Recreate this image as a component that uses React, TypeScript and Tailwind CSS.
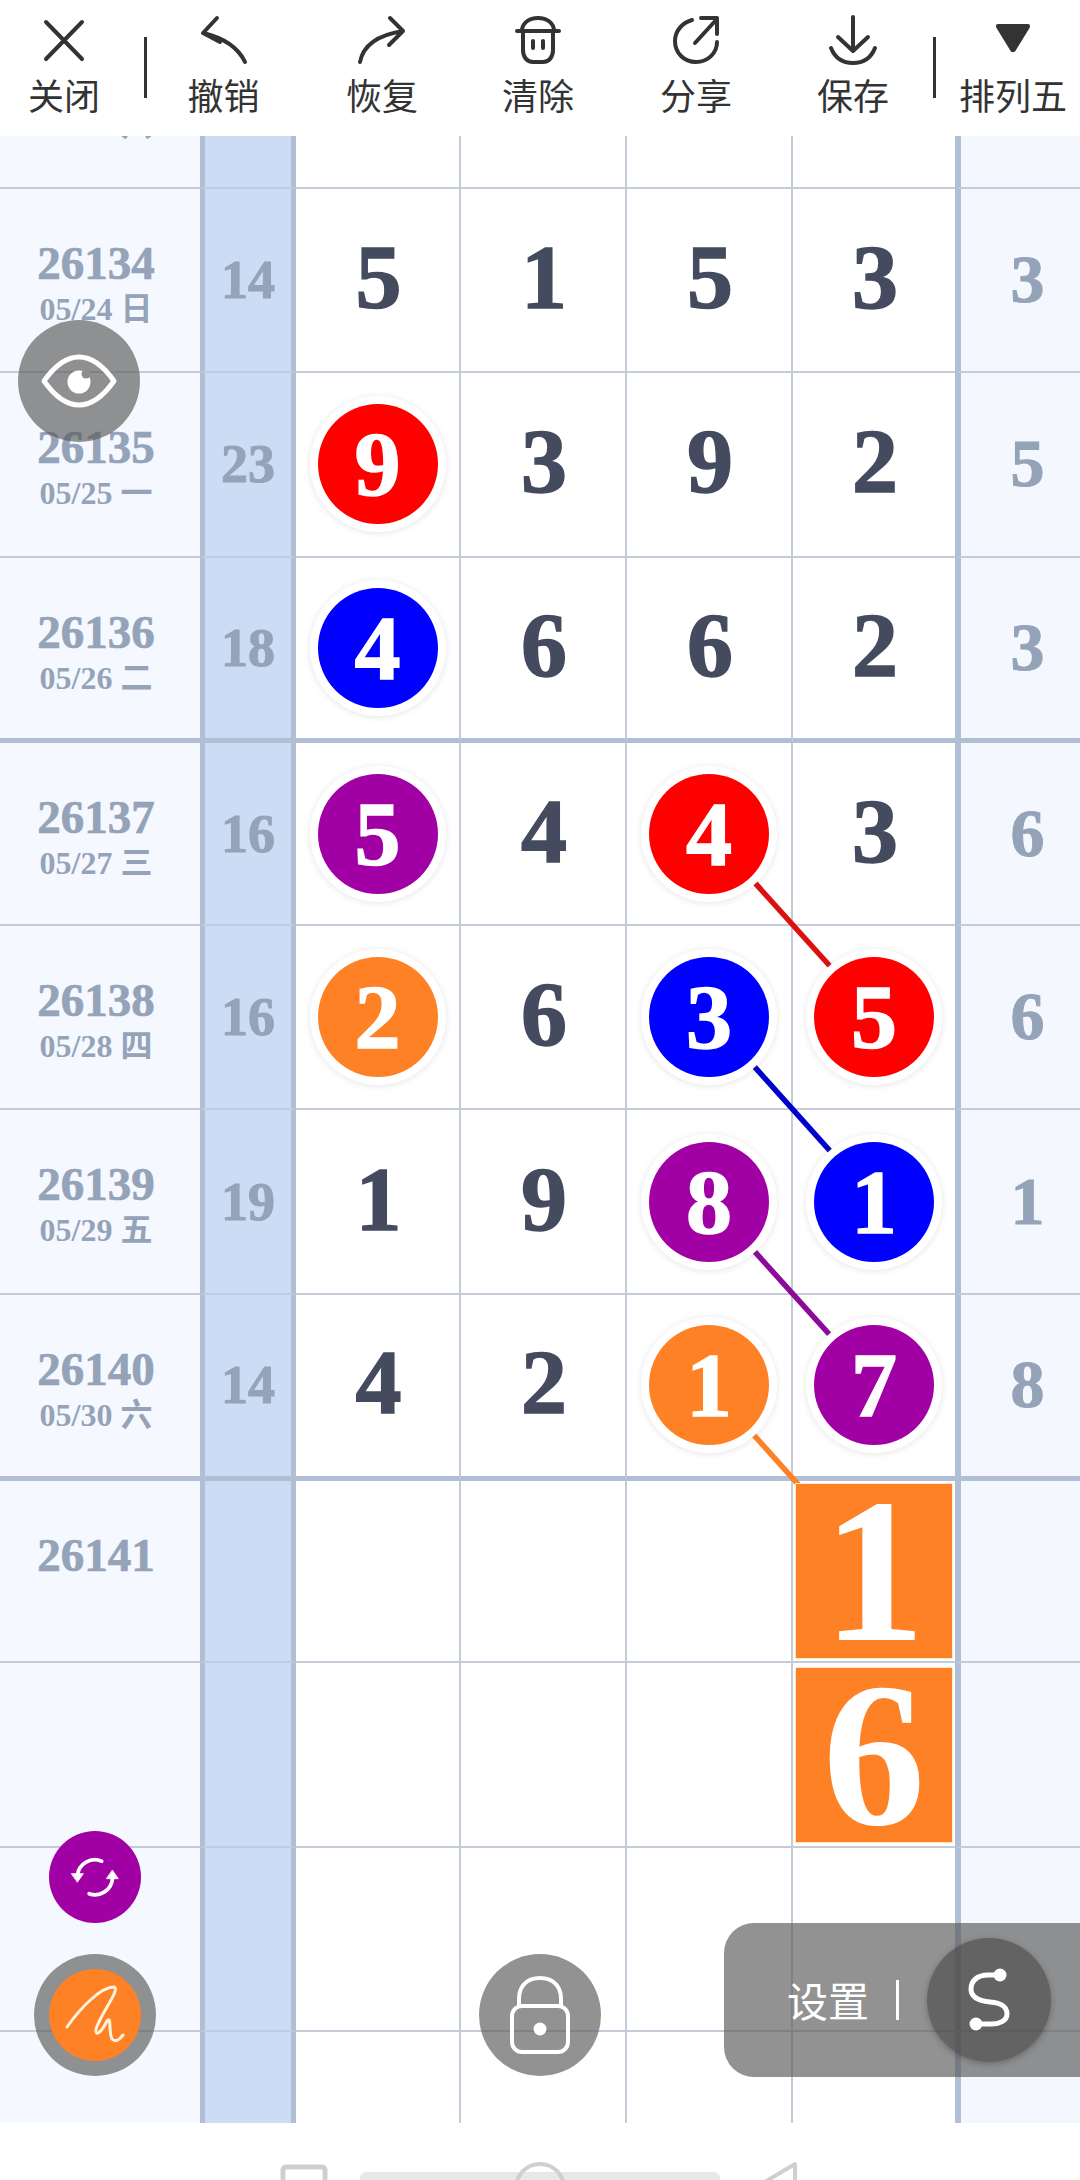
import React from "react";

const SERIF = "font-['Liberation_Serif','Noto_Sans_CJK_SC',serif] font-bold";
const BALL: Record<string, string> = {
  r: "bg-[#ff0000]",
  b: "bg-[#0000ff]",
  p: "bg-[#a100a5]",
  o: "bg-[#ff8126]",
};

type Num = [string, string?];
type Row = { id: string; date: string; sum: string; nums: Num[]; last: string; thick?: boolean; afterThick?: boolean };

const rows: Row[] = [
  { id: "26133", date: "05/23 六", sum: "", nums: [[""], [""], [""], [""]], last: "" },
  { id: "26134", date: "05/24 日", sum: "14", nums: [["5"], ["1"], ["5"], ["3"]], last: "3" },
  { id: "26135", date: "05/25 一", sum: "23", nums: [["9", "r"], ["3"], ["9"], ["2"]], last: "5" },
  { id: "26136", date: "05/26 二", sum: "18", nums: [["4", "b"], ["6"], ["6"], ["2"]], last: "3", thick: true },
  { id: "26137", date: "05/27 三", sum: "16", nums: [["5", "p"], ["4"], ["4", "r"], ["3"]], last: "6", afterThick: true },
  { id: "26138", date: "05/28 四", sum: "16", nums: [["2", "o"], ["6"], ["3", "b"], ["5", "r"]], last: "6" },
  { id: "26139", date: "05/29 五", sum: "19", nums: [["1"], ["9"], ["8", "p"], ["1", "b"]], last: "1" },
  { id: "26140", date: "05/30 六", sum: "14", nums: [["4"], ["2"], ["1", "o"], ["7", "p"]], last: "8", thick: true },
  { id: "26141", date: "", sum: "", nums: [[""], [""], [""], ["1", "big"]], last: "", afterThick: true },
  { id: "", date: "", sum: "", nums: [[""], [""], [""], ["6", "big"]], last: "" },
  { id: "", date: "", sum: "", nums: [[""], [""], [""], [""]], last: "" },
  { id: "", date: "", sum: "", nums: [[""], [""], [""], [""]], last: "" },
];

const CELL_W = ["w-[165px] border-r-2", "w-[166px] border-r-2", "w-[166px] border-r-2", "w-[162px]"];

function Cell({ n, v, line }: { n: number; v: Num; line: string }) {
  const [d, kind] = v;
  return (
    <div className={`${CELL_W[n]} ${line} flex items-center justify-center border-r-[#c5ccd8] bg-white`}>
      {kind === "big" ? (
        <div className={`${SERIF} relative z-10 flex h-[174px] w-[156px] items-center justify-center bg-[#ff8126] text-[205px] leading-none text-white shadow-[0_0_0_1px_#ffe9c9]`}>
          {d}
        </div>
      ) : kind ? (
        <div
          className={`${SERIF} ${BALL[kind]} relative z-10 flex h-[120px] w-[120px] items-center justify-center rounded-full text-[92px] leading-none text-white [-webkit-text-stroke:1.5px_#ffffff] shadow-[0_0_0_8px_#ffffff,0_1px_6px_8px_rgba(110,90,90,0.16)]`}
        >
          {d}
        </div>
      ) : (
        <span className={`${SERIF} translate-x-[1px] -translate-y-[3px] text-[92px] leading-none text-[#454b5f] [-webkit-text-stroke:1.5px_#454b5f]`}>{d}</span>
      )}
    </div>
  );
}

function GridRow({ r }: { r: Row }) {
  const h = r.thick ? "h-[185.8px]" : r.afterThick ? "h-[182.8px]" : "h-[184.3px]";
  const line = r.thick ? "border-b-[5px] border-b-[#b0bfd5]" : "border-b-2 border-b-[#c5ccd8]";
  const blueLine = r.thick ? "border-b-[5px] border-b-[#b0bfd5]" : "border-b-2 border-b-[#bccce6]";
  return (
    <div className={`flex ${h} shrink-0`}>
      <div className={`flex w-[200px] flex-col items-center bg-[#f5f8ff] pr-[8px] pt-[49px] ${line}`}>
        <div className={`${SERIF} h-[50px] text-[47px] leading-[50px] text-[#94a3b8] [-webkit-text-stroke:0.7px_#94a3b8]`}>{r.id}</div>
        <div className={`${SERIF} mt-[3px] h-[36px] text-[32px] leading-[36px] text-[#94a3b8]`}>{r.date}</div>
      </div>
      <div className={`flex w-[96px] items-center justify-center border-x-[5px] border-x-[#b0bfd5] bg-[#cddcf5] ${blueLine}`}>
        <span className={`${SERIF} text-[54px] leading-none text-[#94a3b8] [-webkit-text-stroke:1px_#94a3b8]`}>{r.sum}</span>
      </div>
      {r.nums.map((v, i) => (
        <Cell key={i} n={i} v={v} line={line} />
      ))}
      <div className={`flex flex-1 items-center justify-center border-l-[6px] border-l-[#b0bfd5] bg-[#f4f7fd] pl-[14px] ${line}`}>
        <span className={`${SERIF} -translate-y-[1px] text-[68px] leading-none text-[#94a3b8] [-webkit-text-stroke:1px_#94a3b8]`}>{r.last}</span>
      </div>
    </div>
  );
}

function ToolIcon({ w, children }: { w: number; children: React.ReactNode }) {
  return (
    <svg width={w} height={56} viewBox={`0 0 ${w} 56`} fill="none" stroke="#333333" strokeWidth={4} strokeLinecap="round" strokeLinejoin="round">
      {children}
    </svg>
  );
}

function Tool({ cls, label, children }: { cls: string; label: string; children: React.ReactNode }) {
  return (
    <div className={`flex flex-col items-center ${cls}`}>
      <div className="mt-[13px] h-[56px]">{children}</div>
      <div className="mt-[3px] text-[36px] leading-[44px] text-[#333333]">{label}</div>
    </div>
  );
}

function Sep({ cls }: { cls: string }) {
  return <div className={`mt-[37px] h-[61px] w-[3px] bg-[#333333] ${cls}`} />;
}

const Connector = ({ x1, y1, x2, y2, c }: { x1: number; y1: number; x2: number; y2: number; c: string }) => (
  <line x1={x1} y1={y1} x2={x2} y2={y2} stroke={c} strokeWidth={5.5} />
);

export default function App() {
  return (
    <div className="relative flex h-[2180px] w-[1080px] flex-col overflow-hidden bg-white font-['Noto_Sans_CJK_SC','Noto_Sans',sans-serif]">
      <header className="relative z-20 flex h-[136px] shrink-0 bg-white">
        <Tool cls="w-[128px]" label="关闭">
          <ToolIcon w={44}>
            <path d="M4 9 L40 46 M40 9 L4 46" />
          </ToolIcon>
        </Tool>
        <Sep cls="ml-[16px]" />
        <Tool cls="w-[153px]" label="撤销">
          <ToolIcon w={52}>
            <path d="M19 5 L5 20 L22 29 M5 20 C22 24 39 32 47 49" />
          </ToolIcon>
        </Tool>
        <Tool cls="w-[164px]" label="恢复">
          <ToolIcon w={52}>
            <path d="M34 5 L47 18 L33 32 M47 18 C28 21 8 28 4 49" />
          </ToolIcon>
        </Tool>
        <Tool cls="w-[148px]" label="清除">
          <ToolIcon w={48}>
            <path d="M3 18 H45 M8 18 C8 10 15 5 24 5 C33 5 40 10 40 18 M9 18 V37 C9 44 13 49 19 49 H29 C35 49 39 44 39 37 V18 M19 28 V35 M29 28 V35" />
          </ToolIcon>
        </Tool>
        <Tool cls="w-[168px]" label="分享">
          <ToolIcon w={48}>
            <path d="M20 7 C10 10 3 18 3 28 C3 40 12 49 24 49 C36 49 45 40 45 29 M23 30 L45 6 M29 5 H45 V21" />
          </ToolIcon>
        </Tool>
        <Tool cls="w-[146px]" label="保存">
          <ToolIcon w={50}>
            <path d="M25 4 V37 M10 24 L25 38 L40 24 M3 35 C7 45 15 50 25 50 C35 50 43 45 47 35" />
          </ToolIcon>
        </Tool>
        <Sep cls="ml-[7px]" />
        <Tool cls="w-[144px] pl-[10px]" label="排列五">
          <svg width={36} height={56} viewBox="0 0 36 56">
            <path d="M3 11 H33 C35 11 35.5 13 34.5 15 L21 37 C19.5 40 16.5 40 15 37 L1.5 15 C0.5 13 1 11 3 11 Z" fill="#333333" />
          </svg>
        </Tool>
      </header>

      <main className="relative h-[1987px] shrink-0 overflow-hidden">
        <div className="-mt-[131.3px] flex flex-col">
          {rows.map((r, i) => (
            <GridRow key={i} r={r} />
          ))}
        </div>
        <svg className="absolute left-0 top-0 z-[5]" width={1080} height={1987} viewBox="0 136 1080 1987">
          <Connector x1={709} y1={832} x2={875} y2={1016} c="#dd1010" />
          <Connector x1={709} y1={1016} x2={875} y2={1201} c="#0000cc" />
          <Connector x1={709} y1={1201} x2={875} y2={1385} c="#8a0a9a" />
          <Connector x1={709} y1={1385} x2={875} y2={1570} c="#ff8126" />
        </svg>
      </main>

      <footer className="relative h-[57px] shrink-0 bg-white">
        <svg width={1080} height={57} viewBox="0 2123 1080 57" fill="none">
          <rect x={283} y={2167} width={42} height={40} rx={3} stroke="#cfcfcf" strokeWidth={5} />
          <rect x={360} y={2172} width={360} height={30} rx={6} fill="#e8e8e8" />
          <circle cx={540} cy={2188} r={24} stroke="#cfcfcf" strokeWidth={4} />
          <path d="M795 2164 L758 2186 L795 2210 Z" stroke="#cfcfcf" strokeWidth={4} strokeLinejoin="round" />
        </svg>
      </footer>

      {/* eye */}
      <div className="absolute left-[18px] top-[320px] z-30 flex h-[122px] w-[122px] items-center justify-center rounded-full bg-[rgba(90,90,90,0.66)]">
        <svg width={78} height={54} viewBox="0 0 78 54" fill="none">
          <path d="M4 27 C16 10 28 3 39 3 C50 3 62 10 74 27 C62 44 50 51 39 51 C28 51 16 44 4 27 Z" stroke="#ffffff" strokeWidth={5} strokeLinejoin="round" />
          <circle cx={39} cy={28} r={11.5} fill="#ffffff" />
          <circle cx={46} cy={20} r={4.5} fill="#8c8c8c" />
        </svg>
      </div>

      {/* refresh */}
      <div className="absolute left-[49px] top-[1831px] z-30 flex h-[92px] w-[92px] items-center justify-center rounded-full bg-[#a100a5]">
        <svg width={50} height={50} viewBox="0 0 60 60" fill="none" stroke="#ffffff" strokeWidth={4.5} strokeLinecap="round">
          <path d="M9 28 A 21 21 0 0 1 38 11" />
          <path d="M51 32 A 21 21 0 0 1 23 50" />
          <path d="M2 26 H16 L9 36 Z" fill="#ffffff" strokeWidth={1} strokeLinejoin="round" />
          <path d="M44 32 H58 L51 22 Z" fill="#ffffff" strokeWidth={1} strokeLinejoin="round" />
        </svg>
      </div>

      {/* pen */}
      <div className="absolute left-[34px] top-[1954px] z-30 flex h-[122px] w-[122px] items-center justify-center rounded-full bg-[rgba(90,90,90,0.66)]">
        <div className="flex h-[92px] w-[92px] items-center justify-center rounded-full bg-[#ff8126]">
          <svg width={60} height={62} viewBox="64 1985 60 62" fill="none" stroke="#fff3dc" strokeWidth={3} strokeLinecap="round" strokeLinejoin="round">
            <path d="M66 2028 C80 2008 100 1988 113 1988 C120 1990 100 2014 95 2030 C94 2038 100 2034 106 2022 C111 2016 107 2032 111 2040 C115 2044 119 2040 122 2036" />
          </svg>
        </div>
      </div>

      {/* lock */}
      <div className="absolute left-[479px] top-[1954px] z-30 flex h-[122px] w-[122px] items-center justify-center rounded-full bg-[rgba(90,90,90,0.66)]">
        <svg width={62} height={78} viewBox="0 0 62 78" fill="none" stroke="#ffffff" strokeWidth={4}>
          <path d="M10 30 V23 C10 10 18 2 31 2 C44 2 52 10 52 23 V30" />
          <rect x={3} y={30} width={56} height={46} rx={10} />
          <circle cx={31} cy={53} r={6.5} fill="#ffffff" stroke="none" />
        </svg>
      </div>

      {/* settings */}
      <div className="absolute left-[724px] top-[1923px] z-30 flex h-[154px] w-[356px] items-center rounded-l-[30px] bg-[rgba(90,90,90,0.66)] pl-[63px]">
        <span className="-mt-[2px] text-[41px] leading-none text-white">设置</span>
        <div className="ml-[27px] h-[40px] w-[3px] bg-white" />
        <div className="ml-[28px] flex h-[124px] w-[124px] items-center justify-center rounded-full bg-[rgba(70,70,70,0.6)] shadow-[0_2px_6px_rgba(0,0,0,0.25)]">
          <svg width={48} height={64} viewBox="0 0 48 64" fill="none">
            <path d="M35 7 H23 C12 7 6 13 6 21 C6 30 15 33 25 34 C36 35 42 38 42 46 C42 53 34 56 27 56 H11" stroke="#ffffff" strokeWidth={5} strokeLinecap="round" />
            <circle cx={35} cy={7} r={6.5} fill="#ffffff" />
            <circle cx={11} cy={56} r={6.5} fill="#ffffff" />
          </svg>
        </div>
      </div>
    </div>
  );
}
